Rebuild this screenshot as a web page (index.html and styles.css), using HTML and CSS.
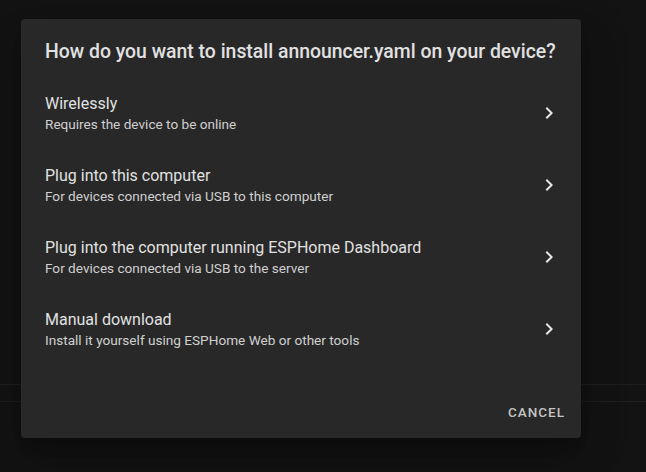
FILE: index.html
```html
<!DOCTYPE html>
<html>
<head>
<meta charset="utf-8">
<link rel="stylesheet" href="styles.css">
</head>
<body>
<div class="page">
  <div class="toolbar-line"></div>
  <div class="toolbar-line second"></div>
</div>
<div class="dialog">
  <h2 class="title">How do you want to install announcer.yaml on your device?</h2>
  <ul class="list">
    <li class="item">
      <div class="texts">
        <span class="primary">Wirelessly</span>
        <span class="secondary">Requires the device to be online</span>
      </div>
      <svg class="chev" viewBox="0 0 24 24"><path d="M8.59,16.58L13.17,12L8.59,7.41L10,6L16,12L10,18L8.59,16.58Z"/></svg>
    </li>
    <li class="item">
      <div class="texts">
        <span class="primary">Plug into this computer</span>
        <span class="secondary">For devices connected via USB to this computer</span>
      </div>
      <svg class="chev" viewBox="0 0 24 24"><path d="M8.59,16.58L13.17,12L8.59,7.41L10,6L16,12L10,18L8.59,16.58Z"/></svg>
    </li>
    <li class="item">
      <div class="texts">
        <span class="primary">Plug into the computer running ESPHome Dashboard</span>
        <span class="secondary">For devices connected via USB to the server</span>
      </div>
      <svg class="chev" viewBox="0 0 24 24"><path d="M8.59,16.58L13.17,12L8.59,7.41L10,6L16,12L10,18L8.59,16.58Z"/></svg>
    </li>
    <li class="item">
      <div class="texts">
        <span class="primary">Manual download</span>
        <span class="secondary">Install it yourself using ESPHome Web or other tools</span>
      </div>
      <svg class="chev" viewBox="0 0 24 24"><path d="M8.59,16.58L13.17,12L8.59,7.41L10,6L16,12L10,18L8.59,16.58Z"/></svg>
    </li>
  </ul>
  <div class="actions">
    <button class="btn">Cancel</button>
  </div>
</div>
</body>
</html>
```
FILE: styles.css
```css
html, body {
  margin: 0;
  padding: 0;
  background: #131313;
  font-family: Roboto, "Liberation Sans", sans-serif;
  -webkit-font-smoothing: antialiased;
}
.page {
  height: 472px;
  padding-top: 384px;
  box-sizing: border-box;
}
.toolbar-line {
  height: 1px;
  background: #1e1e1e;
}
.toolbar-line.second {
  margin-top: 16px;
}
.dialog {
  position: absolute;
  left: 21px;
  top: 19px;
  width: 560px;
  height: 419px;
  box-sizing: border-box;
  background: #282828;
  border-radius: 4px;
  box-shadow: 0 11px 15px -7px rgba(0,0,0,0.2), 0 24px 38px 3px rgba(0,0,0,0.14), 0 9px 46px 8px rgba(0,0,0,0.12);
  display: flex;
  flex-direction: column;
}
.title {
  margin: 0;
  padding: 17px 24px 0;
  font-size: 19.4px;
  font-weight: 500;
  line-height: 32px;
  white-space: nowrap;
  color: #e1e1e1;
}
.list {
  list-style: none;
  margin: 9px 0 0;
  padding: 0;
}
.item {
  height: 72px;
  padding: 0 20px 0 24px;
  display: flex;
  align-items: center;
  justify-content: space-between;
}
.texts {
  display: flex;
  flex-direction: column;
  padding-top: 1px;
}
.primary {
  font-size: 16px;
  line-height: 20px;
  color: #e1e1e1;
}
.secondary {
  font-size: 13.6px;
  line-height: 20px;
  color: #d0d0d0;
}
.chev {
  width: 24px;
  height: 24px;
  fill: #e8e8e8;
}
.actions {
  margin-top: auto;
  min-height: 52px;
  padding: 8px;
  box-sizing: border-box;
  display: flex;
  justify-content: flex-end;
  align-items: center;
}
.btn {
  height: 36px;
  padding: 0 8px;
  min-width: 64px;
  background: none;
  border: none;
  font-family: Roboto, "Liberation Sans", sans-serif;
  font-size: 13.5px;
  font-weight: 500;
  letter-spacing: 1px;
  text-transform: uppercase;
  color: #c4c4c4;
}
```
